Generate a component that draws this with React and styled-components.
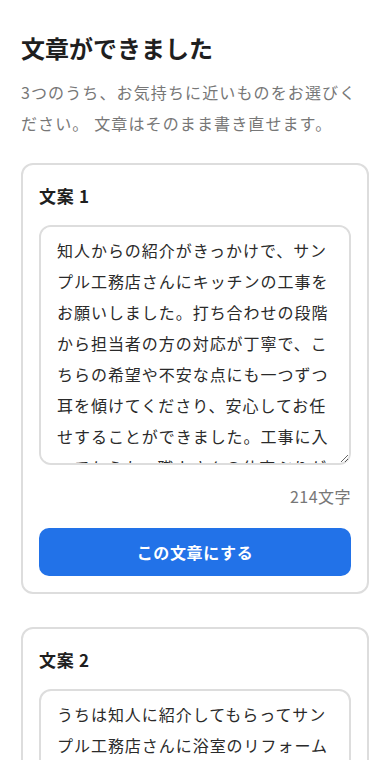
import React, { useState } from "react";
import styled, { createGlobalStyle } from "styled-components";

const GlobalStyle = createGlobalStyle`
  html, body {
    margin: 0;
    padding: 0;
    background: #ffffff;
  }
  body {
    font-family: "Noto Sans CJK JP", "Noto Sans", sans-serif;
    color: #222222;
  }
  * {
    box-sizing: border-box;
  }
`;

const drafts = [
  {
    id: 1,
    text:
      "知人からの紹介がきっかけで、サンプル工務店さんにキッチンの工事をお願いしました。打ち合わせの段階から担当者の方の対応が丁寧で、こちらの希望や不安な点にも一つずつ耳を傾けてくださり、安心してお任せすることができました。工事に入ってからも、職人さんの仕事ぶりがとても丁寧で、毎日の片付けもしっかりしていただきました。完成したキッチンは使い勝手がよく、家族で料理をする時間が増えました。本当にお願いしてよかったです。",
    count: 214,
  },
  {
    id: 2,
    text:
      "うちは知人に紹介してもらってサンプル工務店さんに浴室のリフォームをお願いしました。最初の相談から見積もりまでとても分かりやすく説明していただき、工事中も毎日きれいに片付けてくださいました。仕上がりにも大満足です。",
    count: 108,
  },
];

function DraftCard({ draft }) {
  const [value, setValue] = useState(draft.text);
  return (
    <Card>
      <CardTitle>文案 {draft.id}</CardTitle>
      <DraftText value={value} onChange={(e) => setValue(e.target.value)} />
      <Count>{draft.count}文字</Count>
      <SelectButton type="button">この文章にする</SelectButton>
    </Card>
  );
}

export default function App() {
  return (
    <>
      <GlobalStyle />
      <Page>
        <Title>文章ができました</Title>
        <Lead>
          3つのうち、お気持ちに近いものをお選びください。 文章はそのまま書き直せます。
        </Lead>
        <CardList>
          {drafts.map((d) => (
            <DraftCard key={d.id} draft={d} />
          ))}
        </CardList>
      </Page>
    </>
  );
}

const Page = styled.main`
  padding: 31px 21px 40px;
`;

const Title = styled.h1`
  margin: 0;
  font-size: 24px;
  line-height: 34px;
  font-weight: 700;
  color: #1f1f1f;
`;

const Lead = styled.p`
  margin: 12px 0 0;
  font-size: 16px;
  line-height: 31px;
  letter-spacing: 0.07em;
  color: #777777;
`;

const CardList = styled.div`
  margin-top: 24px;
  display: flex;
  flex-direction: column;
  gap: 33px;
`;

const Card = styled.section`
  border: 2px solid #dddddd;
  border-radius: 12px;
  padding: 18px 16px 16px;
  display: flex;
  flex-direction: column;
`;

const CardTitle = styled.h2`
  margin: 0;
  font-size: 17px;
  line-height: 26px;
  font-weight: 700;
  letter-spacing: 0.04em;
  color: #1f1f1f;
`;

const DraftText = styled.textarea`
  display: block;
  margin-top: 16px;
  width: 100%;
  height: 240px;
  border: 2px solid #dddddd;
  border-radius: 12px;
  padding: 8px 16px;
  font-family: inherit;
  font-size: 16px;
  line-height: 31px;
  letter-spacing: 0.06em;
  color: #2a2a2a;
  background: #ffffff;
  resize: vertical;
  outline: none;
`;

const Count = styled.div`
  margin-top: 20px;
  text-align: right;
  font-size: 16px;
  line-height: 22px;
  letter-spacing: 0.03em;
  color: #777777;
`;

const SelectButton = styled.button`
  margin-top: 21px;
  height: 48px;
  width: 100%;
  border: none;
  border-radius: 10px;
  background: #2272e8;
  color: #ffffff;
  font-family: inherit;
  font-size: 16px;
  font-weight: 700;
  letter-spacing: 0.04em;
  cursor: pointer;
`;
